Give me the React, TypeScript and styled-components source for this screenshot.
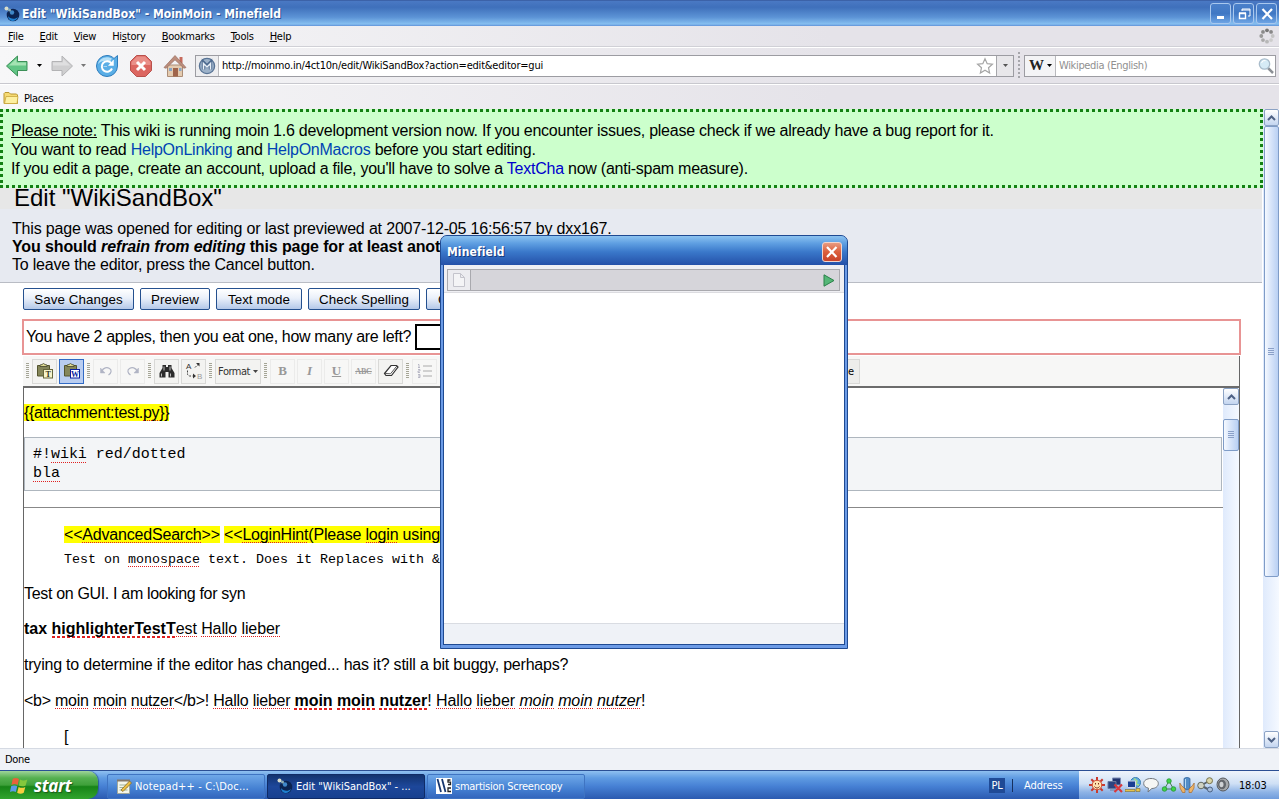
import React from "react";
import styled, { createGlobalStyle } from "styled-components";

const ui = `"DejaVu Sans Condensed", "DejaVu Sans", sans-serif`;
const sans = `"Liberation Sans", Arial, sans-serif`;
const mono = `"Liberation Mono", "Courier New", monospace`;

function Globe({ size = 16 }: { size?: number }) {
  return (
    <svg width={size} height={size} viewBox="0 0 16 16">
      <circle cx="9" cy="9" r="6.3" fill="#0b2350" />
      <path d="M4 10c2 3 7 4 10 1-1 3-4 4.500-6 4S4 13 4 10z" fill="#1f7fd0" />
      <circle cx="8" cy="6.500" r="2.200" fill="#3f87c8" />
      <circle cx="2.500" cy="2.500" r="2" fill="#d8dccb" />
      <circle cx="5.500" cy="4" r="1.500" fill="#8fb0b8" />
    </svg>
  );
}

function BackArrow() {
  return (
    <svg width="24" height="24" viewBox="0 0 24 24">
      <path d="M1.500 12 12.500 2v5.500H22v9H12.500V22z" fill="#62c585" stroke="#3c9058" />
      <path d="M4 11.500 11.500 4.500v4H21v3z" fill="#a4e3b3" />
    </svg>
  );
}

function ForwardArrow() {
  return (
    <svg width="24" height="24" viewBox="0 0 24 24">
      <path d="M22.500 12 12 2v5.500H2v9h10V22z" fill="#cfcfd0" stroke="#b3b3b5" />
      <path d="M20 11.500 13 5v3.500H3v3z" fill="#dfdfe0" />
    </svg>
  );
}

function Reload() {
  return (
    <svg width="24" height="24" viewBox="0 0 24 24">
      <path
        d="M19 4.500 22.500 1.500v10.500A10.500 10.500 0 0 1 12 22.500 10.500 10.500 0 0 1 1.500 12 10.500 10.500 0 0 1 12 1.500c2.800 0 5 1 7 3z"
        fill="#5aaee6"
        stroke="#2f7dbd"
      />
      <path d="M3 10C4 5 10 1 17 4.500L15 7.500C10 6 6 7 3 10z" fill="#b4e0f8" />
      <path d="M16.500 9.500a5.300 5.300 0 1 0 .5 5" fill="none" stroke="#fff" strokeWidth="2" />
      <path d="M8.500 12.500h3.500M18.500 6v5.500h-5z" stroke="#fff" fill="#fff" strokeWidth=".5" />
    </svg>
  );
}

function Stop() {
  return (
    <svg width="24" height="24" viewBox="0 0 24 24">
      <path d="M7.500 1.500h9l6 6v9l-6 6h-9l-6-6v-9z" fill="#dc6660" stroke="#b8504c" />
      <path d="M8 2.500h8l5.500 5.500v3h-19V8z" fill="#ea8f88" />
      <path d="m8 8 8 8m0-8-8 8" stroke="#fff" strokeWidth="3" />
    </svg>
  );
}

function Home() {
  return (
    <svg width="24" height="24" viewBox="0 0 24 24">
      <path d="M16.500 3h3v6h-3z" fill="#c66a5c" />
      <path d="M4.500 11h15v11.500h-15z" fill="#e4cbb0" stroke="#ac8d76" />
      <path d="m1 13.500 11-12 11 12-2 .8-9-8.500-9 8.500z" fill="#bc8d7c" stroke="#966c5d" strokeWidth=".7" />
      <path d="M10 14h5v8.500h-5z" fill="#a0654b" />
      <path d="M6 14h3v3H6zM16 14h2.500v3H16z" fill="#8aa5c4" />
    </svg>
  );
}

function MoinIcon() {
  return (
    <svg width="18" height="18" viewBox="0 0 18 18">
      <circle cx="9" cy="9" r="7.600" fill="#9db2c9" stroke="#587395" strokeWidth="1.300" />
      <path d="M5.500 12.500v-7L9 9l3.500-3.500v7" fill="none" stroke="#4d6a8f" strokeWidth="3.400" />
      <path d="M5.500 12.500v-6L9 10l3.500-3.500v6" fill="none" stroke="#e9f0f7" strokeWidth="1.500" />
    </svg>
  );
}

function Caret({ color = "#000" }: { color?: string }) {
  return (
    <svg width="5" height="3" viewBox="0 0 5 3">
      <path d="M0 0h5L2.500 3z" fill={color} />
    </svg>
  );
}

function Star() {
  return (
    <svg width="18" height="18" viewBox="0 0 18 18">
      <path
        d="m9 1.800 2.200 4.900 5.200.5-3.900 3.500 1.100 5.300L9 13.200 4.400 16l1.100-5.300-3.900-3.500 5.200-.5z"
        fill="#fff"
        stroke="#a5a5a5"
        strokeWidth="1.200"
      />
    </svg>
  );
}

function Magnifier() {
  return (
    <svg width="18" height="18" viewBox="0 0 18 18">
      <path d="m11 11 5 5" stroke="#8b8f95" strokeWidth="2.500" />
      <circle cx="7.500" cy="7" r="5.200" fill="#d6ebf6" stroke="#a9bccb" strokeWidth="1.300" />
      <path d="M4.500 6a3.500 3.500 0 0 1 4-2.500" stroke="#fff" fill="none" />
    </svg>
  );
}

function Throbber() {
  const dots = ["#777", "#888", "#c4c4c4", "#ccc", "#b8b8b8", "#aaa", "#999", "#8a8a8a"];
  return (
    <svg width="16" height="16" viewBox="0 0 16 16">
      {dots.map((fill, i) => (
        <circle
          key={i}
          cx={8 + 5.700 * Math.sin((i * Math.PI) / 4)}
          cy={8 - 5.700 * Math.cos((i * Math.PI) / 4)}
          r="1.900"
          fill={fill}
        />
      ))}
    </svg>
  );
}

function Folder() {
  return (
    <svg width="16" height="14" viewBox="0 0 16 14">
      <path d="M1 12.500V2.500l1-1h4l1.500 1.500h6l1 1v8.500z" fill="#f6da72" stroke="#b99632" />
      <path d="M1.500 12.500 3 5.500h12l-1 7z" fill="#fdf0a0" stroke="#c9a63c" strokeWidth=".8" />
    </svg>
  );
}

function Chevron({ down }: { down?: boolean }) {
  return (
    <svg width="9" height="6" viewBox="0 0 9 6">
      <path d={down ? "m1 1 3.500 3.500L8 1" : "m1 5 3.500-3.500L8 5"} fill="none" stroke="#4d6185" strokeWidth="2" />
    </svg>
  );
}

function Grip() {
  return (
    <svg width="7" height="8" viewBox="0 0 7 8">
      <path d="M0 .5h6M0 2.500h6M0 4.500h6M0 6.500h6" stroke="#8aa0c8" />
    </svg>
  );
}

function Paste({ letter }: { letter: string }) {
  return (
    <svg width="18" height="16" viewBox="0 0 18 16">
      <path d="M1.500 2.500h12V13h-12z" fill="#85865a" stroke="#55552f" />
      <path d="M4 3.500V2l2-.5L7.500.500 9 1.500l2 .5v1.500z" fill="#dedb93" stroke="#44442a" strokeWidth=".8" />
      <rect x="7.500" y="6.500" width="9" height="8.500" fill={letter === "W" ? "#fff" : "#f6f4cc"} stroke={letter === "W" ? "#0a1fa0" : "#66663c"} />
      <text x="12" y="13.600" fontSize="8" fontWeight="bold" fontFamily="Liberation Serif" textAnchor="middle" fill={letter === "W" ? "#0a1fa0" : "#33331c"}>
        {letter}
      </text>
    </svg>
  );
}

function Undo({ redo }: { redo?: boolean }) {
  return (
    <svg width="14" height="10" viewBox="0 0 14 10">
      <g transform={redo ? "matrix(-1 0 0 1 14 0)" : undefined} fill="none" stroke="#b0b4c4" strokeWidth="1.200">
        <path d="M2.500 5.500C4.500 1.500 8 1 10.500 2.500s2 4.500-1 6.500" />
        <path d="M1.500 2v5H6z" fill="#b0b4c4" strokeWidth=".5" />
      </g>
    </svg>
  );
}

function Binoculars() {
  return (
    <svg width="16" height="14" viewBox="0 0 16 14">
      <path d="M3.500 1H7v2h2V1h3.500v3L15.500 9v4.500H9.500V8h-3v5.500H.5V9l3-5z" fill="#2c2c2c" />
      <path d="M2.500 9.500v3M11.500 9.500v3M5 2.500v4M11 2.500v4" stroke="#bbb" />
    </svg>
  );
}

function Replace() {
  return (
    <svg width="18" height="18" viewBox="0 0 18 18">
      <text x="1" y="6.500" fontSize="8" fontFamily="Liberation Sans" fill="#333">A</text>
      <text x="12" y="17" fontSize="8" fontFamily="Liberation Sans" fill="#999">B</text>
      <path d="m10 5.500 3-3M2.500 8.500v4l2 1.500h3" fill="none" stroke="#444" strokeDasharray="2 1" />
      <path d="M11 1h3.500v3.500zM8 11.500v5l3-2.500z" fill="#333" />
    </svg>
  );
}

function Eraser() {
  return (
    <svg width="16" height="14" viewBox="0 0 16 14">
      <path d="M1.500 9.500 8 1.500h5.500L15 3 8.500 11.500H3z" fill="#fff" stroke="#333" strokeWidth="1.200" />
      <path d="m2 9.500 5.500.3 6.500-8" fill="none" stroke="#555" />
    </svg>
  );
}

function ListIcon() {
  return (
    <svg width="16" height="14" viewBox="0 0 16 14">
      <path d="M6 2h9M6 7h9M6 12h9" stroke="#aaa" />
      <path d="M1 .5h1v3m-1 0h2M1 5.500h2v1.500H1v1.500h2M1 10.500h2v3H1m0-1.500h2" stroke="#aab" fill="none" strokeWidth=".8" />
    </svg>
  );
}

function WindowsFlag() {
  return (
    <svg width="19" height="19" viewBox="0 0 17 17">
      <path d="M2.500 2.500c2-1.200 3.600-1 5.500.2L6.800 8C5 7 3.300 7 1.300 8z" fill="#e9613a" />
      <path d="M9 3.200c2 1 4 1 6.500 0L14 8.500c-2 1-4 1-6 .1z" fill="#85c83c" />
      <path d="M1 9.200c2-1 3.700-1 5.500 0l-1.300 5.200c-1.700-1-3.400-1-5.200 0z" fill="#5b9be8" />
      <path d="M7.700 9.800c2 1 4 1 6 0l-1.400 5.200c-2 1.200-4 1-5.900 0z" fill="#f7ce3f" />
    </svg>
  );
}

function Notepad() {
  return (
    <svg width="16" height="17" viewBox="0 0 16 17">
      <path d="M1.500 2.500h12v13h-12z" fill="#f4f6ea" stroke="#a3a99a" />
      <path d="M1 1.500h13v2H1z" fill="#85796a" />
      <path d="M3.500 7h8M3.500 9.500h8M3.500 12h8" stroke="#a0b39a" />
      <path d="m5 12 8.500-9 2 2-8.500 8.500z" fill="#ecc143" stroke="#7c5b1c" strokeWidth=".7" />
    </svg>
  );
}

function Screencopy() {
  return (
    <svg width="16" height="16" viewBox="0 0 16 16">
      <path d="M0 0h16v16H0z" fill="#fff" />
      <path d="M1.500 1 5 14M6 1l3.500 13" stroke="#17376f" strokeWidth="1.800" />
      <path d="M14.500 2h-2.500v2.200h2.500v2.300H12M15 10h-3v3.500h3" stroke="#222" fill="none" strokeWidth="1.300" />
    </svg>
  );
}

function Sun() {
  return (
    <svg width="16" height="16" viewBox="0 0 16 16">
      <path d="M8 0v16M0 8h16M2.300 2.300l11.400 11.400M13.700 2.300 2.300 13.700" stroke="#c93a2e" strokeWidth="2" />
      <circle cx="8" cy="8" r="4.800" fill="#ffe3b0" stroke="#d24a32" strokeWidth="1" />
      <path d="M6.500 6v1.500M9.500 6v1.500M5.500 9.500c1.500 2 3.500 2 5 0" fill="none" stroke="#7c2b17" />
    </svg>
  );
}

function NetworkDown() {
  return (
    <svg width="16" height="16" viewBox="0 0 16 16">
      <path d="M5.500 1h8v7h-8z" fill="#22356f" stroke="#7c8db5" />
      <path d="M1 4.500h8v7H1zM3 13h5" fill="#2c4480" stroke="#68799f" />
      <path d="m7.500 7.500 7.500 7.500m0-7.500L7.500 15" stroke="#d9373c" strokeWidth="2.200" />
    </svg>
  );
}

function NetworkGlobe() {
  return (
    <svg width="16" height="16" viewBox="0 0 16 16">
      <circle cx="10.500" cy="5.500" r="5" fill="#61aede" stroke="#3a7eb3" />
      <path d="M9 1.500 12 4l-1 3 3 1" stroke="#a7dc86" strokeWidth="1.500" fill="none" />
      <path d="M2.500 4h8v6.500h-8z" fill="#1a3f93" stroke="#d3d9e8" />
      <path d="M0 12.500h10v2H0zM11 11.500h4v3h-4z" fill="#e6c34b" stroke="#6d5a22" strokeWidth=".5" />
    </svg>
  );
}

function Bubble() {
  return (
    <svg width="16" height="16" viewBox="0 0 16 16">
      <path d="M8 1.500c4.300 0 7.300 2 7.300 5s-3 5-6.500 5L5 15l.5-3.800C2.500 10.500.7 9 .7 6.500c0-3 3-5 7.300-5z" fill="#f6f6f4" stroke="#73777d" />
    </svg>
  );
}

function Nodes() {
  return (
    <svg width="16" height="16" viewBox="0 0 16 16">
      <path d="M8 4 3.500 12h9z" fill="none" stroke="#438250" />
      <circle cx="8" cy="4" r="2.300" fill="#3ed449" stroke="#1e8d2d" strokeWidth=".7" />
      <circle cx="3.500" cy="12" r="2.300" fill="#3ed449" stroke="#1e8d2d" strokeWidth=".7" />
      <circle cx="12.500" cy="12" r="2.300" fill="#3ed449" stroke="#1e8d2d" strokeWidth=".7" />
    </svg>
  );
}

function Hands() {
  return (
    <svg width="16" height="16" viewBox="0 0 16 16">
      <path d="M5 1.500 8 0l3 1.500v10L8 13l-3-1.500z" fill="#528cc6" stroke="#2c5d96" strokeWidth=".7" />
      <path d="M6.500 2v9" stroke="#b5d6ef" />
      <path d="M.8 6 2.500 8.500 6 12v3.500H3.500L1 11zM15.200 6l-1.700 2.500L10 12v3.500h2.500L15 11z" fill="#edb56a" stroke="#a7692b" strokeWidth=".7" />
    </svg>
  );
}

function Share() {
  return (
    <svg width="17" height="16" viewBox="0 0 17 16">
      <path d="M4 8.500 12 4M4 8.500l8.500 4.500" stroke="#59636b" strokeWidth="2" />
      <circle cx="4" cy="8.500" r="3.300" fill="#cfd2c2" stroke="#62685f" />
      <circle cx="12.500" cy="3.700" r="3" fill="#d9d5a9" stroke="#77734c" />
      <circle cx="13" cy="12.500" r="2.500" fill="#a8bedb" stroke="#4a6184" />
    </svg>
  );
}

function Speaker() {
  return (
    <svg width="14" height="16" viewBox="0 0 14 16">
      <ellipse cx="7" cy="7.500" rx="6" ry="6.500" fill="#a6a9ac" stroke="#56595d" />
      <ellipse cx="6" cy="7.500" rx="4" ry="4.800" fill="#63676c" />
      <ellipse cx="5.500" cy="7.500" rx="2" ry="2.800" fill="#cfd2d5" />
    </svg>
  );
}

const menus = ["File", "Edit", "View", "History", "Bookmarks", "Tools", "Help"];
const accessKeys: Record<string, number> = { History: 2 };

function MenuLabel({ label }: { label: string }) {
  const k = accessKeys[label] || 0;
  return (
    <MenuItem>
      {label.slice(0, k)}
      <u>{label[k]}</u>
      {label.slice(k + 1)}
    </MenuItem>
  );
}

function App() {
  return (
    <Screen>
      <GlobalStyle />
      <TitleBar>
        <Globe />
        <TitleText>Edit "WikiSandBox" - MoinMoin - Minefield</TitleText>
        <WindowButton>
          <svg width="18" height="18"><path d="M5 12.500h7" stroke="#fff" strokeWidth="3" /></svg>
        </WindowButton>
        <WindowButton>
          <svg width="18" height="18">
            <path d="M7 6V4h8v7h-2M7 5h8" fill="none" stroke="#fff" />
            <path d="M4.500 8.500h6v5h-6zM4 8h7" fill="none" stroke="#fff" strokeWidth="1.400" />
          </svg>
        </WindowButton>
        <WindowButton>
          <svg width="18" height="18"><path d="m4.500 4 9.500 10M14 4 4.500 14" stroke="#fff" strokeWidth="2.200" /></svg>
        </WindowButton>
      </TitleBar>
      <MenuBar>
        {menus.map(m => (
          <MenuLabel key={m} label={m} />
        ))}
        <ThrobberSlot><Throbber /></ThrobberSlot>
      </MenuBar>
      <NavBar>
        <NavIcon $gap={8}><BackArrow /></NavIcon>
        <NavIcon $gap={8}><Caret /></NavIcon>
        <NavIcon $gap={7}><ForwardArrow /></NavIcon>
        <NavIcon $gap={9}><Caret color="#777" /></NavIcon>
        <NavIcon $gap={10}><Reload /></NavIcon>
        <NavIcon $gap={10}><Stop /></NavIcon>
        <NavIcon $gap={8}><Home /></NavIcon>
        <UrlBox>
          <SiteIcon><MoinIcon /></SiteIcon>
          <UrlText>http://moinmo.in/4ct10n/edit/WikiSandBox?action=edit&amp;editor=gui</UrlText>
          <Star />
          <UrlDrop><Caret color="#555" /></UrlDrop>
        </UrlBox>
        <Splitter />
        <SearchBox>
          <Engine><WikiLetter>W</WikiLetter><Caret /></Engine>
          <SearchText>Wikipedia (English)</SearchText>
          <Magnifier />
        </SearchBox>
      </NavBar>
      <BookmarkBar>
        <Folder />
        <span>Places</span>
      </BookmarkBar>
      <Viewport>
        <Page>
          <Notice>
            <Line $ls={-0.25}><u>Please note:</u> This wiki is running moin 1.6 development version now. If you encounter issues, please check if we already have a bug report for it.</Line>
            <Line $ls={-0.25}>You want to read <WikiLink>HelpOnLinking</WikiLink> and <WikiLink>HelpOnMacros</WikiLink> before you start editing.</Line>
            <Line $ls={-0.25}>If you edit a page, create an account, upload a file, you'll have to solve a <WikiLink $bright>TextCha</WikiLink> now (anti-spam measure).</Line>
          </Notice>
          <Heading>Edit "WikiSandBox"</Heading>
          <Message>
            <Line $h={18} $ls={-0.17}>This page was opened for editing or last previewed at 2007-12-05 16:56:57 by dxx167.</Line>
            <Line $h={18} $ls={-0.12}><b>You should <i>refrain from editing</i> this page for at least anot</b></Line>
            <Line $h={18} $ls={-0.21}>To leave the editor, press the Cancel button.</Line>
          </Message>
          <ButtonRow>
            <FormButton $w={111}>Save Changes</FormButton>
            <FormButton $w={70}>Preview</FormButton>
            <FormButton $w={86}>Text mode</FormButton>
            <FormButton $w={112}>Check Spelling</FormButton>
            <FormButton $w={66}>Cancel</FormButton>
          </ButtonRow>
          <Captcha>
            <span>You have 2 apples, then you eat one, how many are left?</span>
            <CaptchaInput />
          </Captcha>
          <EditorBox>
            <EditorTools>
              <ToolGrip />
              <Tool><Paste letter="T" /></Tool>
              <Tool $active><Paste letter="W" /></Tool>
              <ToolGrip />
              <Tool $dim><Undo /></Tool>
              <Tool $dim><Undo redo /></Tool>
              <ToolGrip />
              <Tool><Binoculars /></Tool>
              <Tool><Replace /></Tool>
              <ToolGrip />
              <Tool $w={46}><FormatLabel>Format</FormatLabel><Caret color="#444" /></Tool>
              <ToolGrip />
              <Tool $dim><Glyph>B</Glyph></Tool>
              <Tool $dim><Glyph $italic>I</Glyph></Tool>
              <Tool $dim><Glyph $under>U</Glyph></Tool>
              <Tool $dim><Glyph $small>ABC</Glyph></Tool>
              <Tool><Eraser /></Tool>
              <ToolGrip />
              <Tool $dim><ListIcon /></Tool>
              <LastTool>e</LastTool>
            </EditorTools>
            <EditorBody>
              <Document>
                <Para $top={15} $ls={-0.31}><Mark>{"{{attachment:test."}<Typo>py</Typo>{"}}"}</Mark></Para>
                <Pre>
                  <div>#!<Typo>wiki</Typo> red/dotted</div>
                  <div><Typo>bla</Typo></div>
                </Pre>
                <Rule />
                <Para $top={17} $indent={40} $ls={-0.19}>
                  <Mark>&lt;&lt;<Typo>AdvancedSearch</Typo>&gt;&gt;</Mark> <Mark>&lt;&lt;<Typo>LoginHint</Typo>(Please <Typo>login</Typo> using</Mark>
                </Para>
                <MonoPara>Test on <Typo>monospace</Typo> text. Does it Replaces with &amp;</MonoPara>
                <Para $top={15} $ls={-0.33}>Test on GUI. I am looking for syn</Para>
                <Para $top={15} $ls={0}><b>tax <Typo $bold>highlighterTestT</Typo></b><Kern $ls={-0.1}><Typo>est</Typo> <Typo>Hallo</Typo> <Typo>lieber</Typo></Kern></Para>
                <Para $top={16} $ls={-0.21}>trying to determine if the editor has changed... has it? still a bit buggy, perhaps?</Para>
                <Para $top={16} $ls={-0.25}>
                  &lt;b&gt; <Typo>moin</Typo> <Typo>moin</Typo> <Typo>nutzer</Typo>&lt;/b&gt;! <Typo>Hallo</Typo> <Typo>lieber</Typo>{" "}
                  <Kern $ls={-0.04}><b><Typo $bold>moin</Typo> <Typo $bold>moin</Typo> <Typo $bold>nutzer</Typo></b></Kern>
                  <Kern $ls={-0.08}>
                    ! <Typo>Hallo</Typo> <Typo>lieber</Typo> <i><Typo>moin</Typo> <Typo>moin</Typo> <Typo>nutzer</Typo></i>!
                  </Kern>
                </Para>
                <Para $top={16} $indent={40}>[</Para>
              </Document>
              <Track>
                <ArrowButton><Chevron /></ArrowButton>
                <Thumb $before={14} $h={32}><Grip /></Thumb>
              </Track>
            </EditorBody>
          </EditorBox>
        </Page>
        <Track $outer>
          <ArrowButton><Chevron /></ArrowButton>
          <Thumb $before={0} $h={451}><Grip /></Thumb>
          <ArrowButton $end><Chevron down /></ArrowButton>
        </Track>
      </Viewport>
      <StatusBar>Done</StatusBar>
      <Taskbar>
        <StartButton><WindowsFlag /><StartText>start</StartText></StartButton>
        <Task $w={158} $ls={0.15}><Notepad /><span>Notepad++ - C:\Doc...</span></Task>
        <Task $w={158} $ls={0} $active><Globe /><span>Edit "WikiSandBox" - ...</span></Task>
        <Task $w={158} $ls={-0.25}><Screencopy /><span>smartision Screencopy</span></Task>
        <Language>PL</Language>
        <AddressLabel>Address</AddressLabel>
        <Tray>
          <Sun />
          <NetworkDown />
          <NetworkGlobe />
          <Bubble />
          <Nodes />
          <Hands />
          <Share />
          <Speaker />
          <Clock>18:03</Clock>
        </Tray>
      </Taskbar>
      <Dialog>
        <DialogTitle>
          <DialogName>Minefield</DialogName>
          <DialogClose>
            <svg width="18" height="18"><path d="m4 4 9.500 10M13.500 4 4 14" stroke="#fff" strokeWidth="2.200" /></svg>
          </DialogClose>
        </DialogTitle>
        <DialogContent>
          <DialogToolbar>
            <DialogUrl>
              <PageSlot>
                <svg width="12" height="14"><path d="M.5.5h7l4 4v9H.5zM7.500.5v4h4" fill="#f4f4f6" stroke="#c4c4cc" /></svg>
              </PageSlot>
              <svg width="12" height="13">
                <path d="M1 .8 11 6.500 1 12.200z" fill="#55b777" stroke="#2a8049" />
              </svg>
            </DialogUrl>
          </DialogToolbar>
          <DialogPage />
          <DialogStatus />
        </DialogContent>
      </Dialog>
    </Screen>
  );
}

const GlobalStyle = createGlobalStyle`
  body {
    margin: 0;
    overflow: hidden;
  }

  * {
    box-sizing: border-box;
  }

  svg {
    display: block;
    flex: none;
  }
`;

const Screen = styled.div`
  position: relative;
  display: flex;
  flex-direction: column;
  width: 1279px;
  height: 799px;
  overflow: hidden;
  background: #fff;
  color: #000;
  font: 11px ${ui};
  letter-spacing: -0.35px;
  white-space: nowrap;
`;

const TitleBar = styled.div`
  display: flex;
  align-items: center;
  gap: 2px;
  height: 26px;
  padding: 0 2px 0 4px;
  border-top: 1px solid #3c62a8;
  background: linear-gradient(#4a79c4, #3f70bb 25%, #5c93d6 65%, #86bff0 92%, #5f92d8);
`;

const TitleText = styled.div`
  flex: 1;
  color: #fff;
  font-size: 12px;
  font-weight: bold;
  letter-spacing: 0.02px;
  text-shadow: 1px 1px 0 #2d5596;
`;

const WindowButton = styled.div`
  width: 21px;
  height: 21px;
  padding: 0.5px;
  border: 1px solid #a9c8ee;
  border-radius: 3px;
  background: linear-gradient(#4b80ca, #4078c4 50%, #6da4e4);
`;

const MenuBar = styled.div`
  display: flex;
  align-items: center;
  gap: 16px;
  height: 21px;
  padding: 0 4px 0 8px;
  border-bottom: 1px solid #d0d0d6;
  background: linear-gradient(90deg, #f7f7f8, #e5e3e9 65%);
`;

const MenuItem = styled.span`
  letter-spacing: -0.25px;
`;

const ThrobberSlot = styled.div`
  margin-left: auto;
`;

const NavBar = styled.div`
  display: flex;
  align-items: center;
  height: 37px;
  padding: 0 3px 0 5px;
  border-top: 1px solid #fff;
  border-bottom: 1px solid #c8c8ce;
  background: linear-gradient(90deg, #f7f7f8, #e5e3e9 65%);
`;

const NavIcon = styled.div<{ $gap: number }>`
  margin-right: ${p => p.$gap}px;
`;

const UrlBox = styled.div`
  display: flex;
  align-items: center;
  width: 819px;
  height: 22px;
  border: 1px solid #9c9ca2;
  background: #fff;
`;

const SiteIcon = styled.div`
  display: flex;
  align-items: center;
  justify-content: center;
  width: 23px;
  height: 20px;
  border-right: 1px solid #b9b9bd;
  background: #eeeef0;
`;

const UrlText = styled.div`
  flex: 1;
  padding-left: 3px;
  letter-spacing: -0.2px;
`;

const UrlDrop = styled.div`
  display: flex;
  align-items: center;
  justify-content: center;
  width: 17px;
  height: 20px;
  margin-left: 2px;
  border-left: 1px solid #a6a6aa;
  background: #e8e7ea;
`;

const Splitter = styled.div`
  width: 2px;
  height: 28px;
  margin: 0 4px 0 4px;
  background: repeating-linear-gradient(#a6a6ab 0 2px, transparent 2px 4px);
`;

const SearchBox = styled.div`
  display: flex;
  flex: 1;
  align-items: center;
  height: 22px;
  border: 1px solid #9c9ca2;
  background: #fff;
`;

const Engine = styled.div`
  display: flex;
  align-items: center;
  gap: 2px;
  width: 31px;
  height: 20px;
  padding-left: 4px;
  border-right: 1px solid #b9b9bd;
  background: #f4f4f6;
`;

const WikiLetter = styled.span`
  width: 16px;
  color: #222;
  font: bold 15px "Liberation Serif", serif;
`;

const SearchText = styled.div`
  flex: 1;
  padding-left: 3px;
  color: #909090;
`;

const BookmarkBar = styled.div`
  display: flex;
  align-items: center;
  gap: 5px;
  height: 25px;
  padding: 2px 0 0 3px;
  border-top: 1px solid #fff;
  background: linear-gradient(90deg, #f7f7f8, #e5e3e9 65%);
`;

const Viewport = styled.div`
  display: flex;
  height: 639px;
  overflow: hidden;
`;

const Page = styled.div`
  width: 1263px;
  height: 639px;
  font: 16px ${sans};
  letter-spacing: -0.1px;
`;

const Notice = styled.div`
  height: 79px;
  padding: 9px 8px;
  border: 3px dotted #128012;
  background: #cfc;
`;

const Line = styled.div<{ $h?: number; $ls: number }>`
  height: ${p => p.$h || 19}px;
  line-height: ${p => p.$h || 19}px;
  letter-spacing: ${p => p.$ls}px;
`;

const WikiLink = styled.span<{ $bright?: boolean }>`
  color: ${p => (p.$bright ? "#00c" : "#0044b3")};
`;

const Heading = styled.div`
  height: 21px;
  margin-right: 1px;
  padding-left: 14px;
  background: #e7e7e7;
  font-size: 24px;
  line-height: 20px;
  letter-spacing: 0;
`;

const Message = styled.div`
  height: 74px;
  margin-right: 1px;
  padding: 11px 12px 0;
  border-bottom: 1px solid #b9bcc4;
  background: #e7eaf1;
`;

const ButtonRow = styled.div`
  display: flex;
  gap: 6px;
  padding: 5px 0 0 23px;
`;

const FormButton = styled.div<{ $w: number }>`
  width: ${p => p.$w}px;
  height: 22px;
  border: 1px solid #24508f;
  border-radius: 2px;
  background: linear-gradient(#fff, #eaf0fa 45%, #b4c8e8);
  font-size: 13.33px;
  line-height: 21px;
  letter-spacing: 0.08px;
  text-align: center;
`;

const Captcha = styled.div`
  display: flex;
  align-items: center;
  gap: 4px;
  width: 1219px;
  height: 36px;
  margin: 9px 0 0 22px;
  padding-left: 2px;
  border: 2px solid #e89494;
  letter-spacing: -0.33px;
`;

const CaptchaInput = styled.div`
  width: 150px;
  height: 26px;
  border: 2px solid #000;
`;

const EditorBox = styled.div`
  width: 1217px;
  height: 393px;
  margin: 1px 0 0 23px;
  border-right: 1px solid #666;
`;

const EditorTools = styled.div`
  display: flex;
  align-items: center;
  height: 32px;
  padding-left: 2px;
  border-bottom: 2px solid #6c6c6c;
  background: #f7f7f6;
`;

const ToolGrip = styled.div`
  width: 3px;
  height: 16px;
  margin: 0 3px 0 1px;
  background: repeating-linear-gradient(#a5a596 0 1px, transparent 1px 2px);
`;

const Tool = styled.div<{ $w?: number; $active?: boolean; $dim?: boolean }>`
  display: flex;
  align-items: center;
  justify-content: center;
  width: ${p => p.$w || 25}px;
  height: 25px;
  margin-right: 2px;
  border: 1px solid ${p => (p.$active ? "#316ac5" : p.$dim ? "#ebebea" : "#d9d9d7")};
  background: ${p => (p.$active ? "#b9cdf0" : p.$dim ? "#f7f7f6" : "#f3f3f1")};
`;

const FormatLabel = styled.span`
  margin-right: 3px;
  color: #333;
  font: 11px ${ui};
  letter-spacing: -0.5px;
`;

const Glyph = styled.span<{ $italic?: boolean; $under?: boolean; $small?: boolean }>`
  color: #999;
  font: bold ${p => (p.$small ? 8 : 13)}px "Liberation Serif", serif;
  font-style: ${p => (p.$italic ? "italic" : "normal")};
  text-decoration: ${p => (p.$under ? "underline" : p.$small ? "line-through" : "none")};
`;

const LastTool = styled.div`
  width: 40px;
  height: 25px;
  margin-left: 381px;
  padding-right: 5px;
  border: 1px solid #d9d9d7;
  background: #ededeb;
  font: 11px ${ui};
  line-height: 23px;
  text-align: right;
`;

const EditorBody = styled.div`
  display: flex;
  height: 361px;
  border-left: 1px solid #666;
`;

const Document = styled.div`
  flex: 1;
  overflow: hidden;
`;

const Para = styled.div<{ $top: number; $indent?: number; $ls?: number }>`
  height: 20px;
  padding-left: ${p => p.$indent || 0}px;
  margin-top: ${p => p.$top}px;
  line-height: 20px;
  letter-spacing: ${p => p.$ls ?? -0.1}px;
`;

const Kern = styled.span<{ $ls: number }>`
  letter-spacing: ${p => p.$ls}px;
`;

const Mark = styled.span`
  background: #ff0;
`;

const Typo = styled.span<{ $bold?: boolean }>`
  padding-bottom: ${p => (p.$bold ? 1 : 0)}px;
  background-image: linear-gradient(90deg, #e02020 ${p => (p.$bold ? 60 : 50)}%, transparent 0);
  background-position: left bottom;
  background-repeat: repeat-x;
  background-size: ${p => (p.$bold ? "5px 2px" : "2px 1px")};
`;

const Pre = styled.div`
  height: 54px;
  margin: 14px 1px 0 0;
  padding: 7px 8px;
  border: 1px solid #aeb6be;
  background: #f3f5f7;
  font: 15px ${mono};
  line-height: 19px;
  letter-spacing: -0.03px;
`;

const Rule = styled.div`
  height: 1px;
  margin-top: 16px;
  background: #888;
`;

const MonoPara = styled.div`
  height: 18px;
  margin: 6px 0 0 40px;
  font: 13.33px ${mono};
  line-height: 18px;
  letter-spacing: 0;
`;

const Track = styled.div<{ $outer?: boolean }>`
  display: flex;
  flex-direction: column;
  width: 16px;
  padding-left: ${p => (p.$outer ? 1 : 0)}px;
  background: linear-gradient(90deg, #dfeafc, #f5f9ff);
`;

const ArrowButton = styled.div<{ $end?: boolean }>`
  display: flex;
  align-items: center;
  justify-content: center;
  height: 17px;
  margin-top: ${p => (p.$end ? "auto" : 0)};
  border: 1px solid #8ba2c4;
  border-radius: 2px;
  background: linear-gradient(#fff, #c3d5f0);
`;

const Thumb = styled.div<{ $before: number; $h: number }>`
  display: flex;
  align-items: center;
  justify-content: center;
  height: ${p => p.$h}px;
  margin-top: ${p => p.$before}px;
  border: 1px solid #7f9cc7;
  border-radius: 2px;
  background: linear-gradient(90deg, #f5f9ff, #dbe7fa 40%, #b9d0f3);
`;

const StatusBar = styled.div`
  height: 22px;
  padding-left: 5px;
  border-top: 1px solid #d5dae3;
  background: #eff2f7;
  line-height: 21px;
`;

const Taskbar = styled.div`
  display: flex;
  align-items: center;
  height: 29px;
  border-top: 1px solid #2b4f94;
  background: linear-gradient(#8fc0f0, #5f9be2 25%, #4680d4 55%, #2b5ab0);
  color: #fff;
`;

const StartButton = styled.div`
  display: flex;
  align-items: center;
  gap: 5px;
  width: 98px;
  height: 28px;
  margin-right: 9px;
  padding-left: 10px;
  border-radius: 0 10px 10px 0;
  background: linear-gradient(#a0d49a, #55b050 25%, #3fa03a 50%, #178417 56%, #32a42e);
  box-shadow: 1px 0 1px #2a5a9a;
`;

const StartText = styled.span`
  font: italic bold 17px "Open Sans", sans-serif;
  letter-spacing: -0.4px;
  text-shadow: 1px 1px 1px #1b5a1b;
`;

const Task = styled.div<{ $w: number; $ls: number; $active?: boolean }>`
  display: flex;
  align-items: center;
  gap: 3px;
  width: ${p => p.$w}px;
  height: 25px;
  margin: 2px 2px 0 0;
  padding-left: ${p => (p.$active ? 9 : 8)}px;
  border: 1px solid ${p => (p.$active ? "#0f2b66" : "#3f74c2")};
  border-radius: 2px;
  background: ${p => (p.$active ? "linear-gradient(#12336f, #1d479a 50%, #17408f)" : "linear-gradient(#6fa8e8, #4480d2 60%, #3366bd)")};
  letter-spacing: ${p => p.$ls}px;
`;

const Language = styled.div`
  width: 16px;
  height: 15px;
  margin-left: 402px;
  background: #1f4a96;
  line-height: 15px;
  text-align: center;
`;

const AddressLabel = styled.div`
  margin-left: 7px;
  padding-left: 11px;
  border-left: 1px solid #16305f;
  letter-spacing: -0.1px;
`;

const Tray = styled.div`
  display: flex;
  align-items: center;
  gap: 2px;
  width: 200px;
  height: 28px;
  margin-left: auto;
  padding-left: 10px;
  background: linear-gradient(#eef4fb, #cfe0f5 45%, #8fb4e6 75%, #6f9cdc);
  color: #000;
`;

const Clock = styled.div`
  margin-left: 7px;
  letter-spacing: -0.2px;
`;

const Dialog = styled.div`
  position: absolute;
  left: 440px;
  top: 235px;
  display: flex;
  flex-direction: column;
  width: 408px;
  height: 414px;
  padding: 0 3px 3px;
  border: 1px solid #1f4a92;
  border-radius: 7px 7px 0 0;
  background: #6c9be6;
`;

const DialogTitle = styled.div`
  display: flex;
  align-items: center;
  justify-content: space-between;
  height: 29px;
  margin: 0 -3px;
  padding: 2px 5px 0 6px;
  border-radius: 6px 6px 0 0;
  background: linear-gradient(#8cc3f0, #5f9fe2 25%, #3a78ca 55%, #2450a8);
`;

const DialogName = styled.span`
  color: #fff;
  font-size: 12px;
  font-weight: bold;
  letter-spacing: 0.12px;
  text-shadow: 1px 1px 0 #173a7c;
`;

const DialogClose = styled.div`
  width: 20px;
  height: 20px;
  border: 1px solid #f2d4cc;
  border-radius: 3px;
  background: linear-gradient(#e89a80, #dc5f3c 50%, #c8432a);
`;

const DialogContent = styled.div`
  display: flex;
  flex: 1;
  flex-direction: column;
  border: 1px solid #1f4a92;
  border-width: 0 1px 1px;
  margin: 0 -1px;
  background: #fff;
`;

const DialogToolbar = styled.div`
  height: 28px;
  padding: 4px 4px 0 3px;
  border-bottom: 1px solid #dcdce0;
  background: #efeff3;
`;

const DialogUrl = styled.div`
  display: flex;
  align-items: center;
  justify-content: space-between;
  height: 22px;
  padding-right: 4px;
  border: 1px solid #a9a9ae;
  background: #d6d5da;
`;

const PageSlot = styled.div`
  display: flex;
  align-items: center;
  justify-content: center;
  width: 23px;
  height: 20px;
  border-right: 1px solid #a9a9ae;
  background: #ececf0;
`;

const DialogPage = styled.div`
  flex: 1;
`;

const DialogStatus = styled.div`
  height: 21px;
  border-top: 1px solid #d9dce2;
  background: #eff2f7;
`;

export default App;
